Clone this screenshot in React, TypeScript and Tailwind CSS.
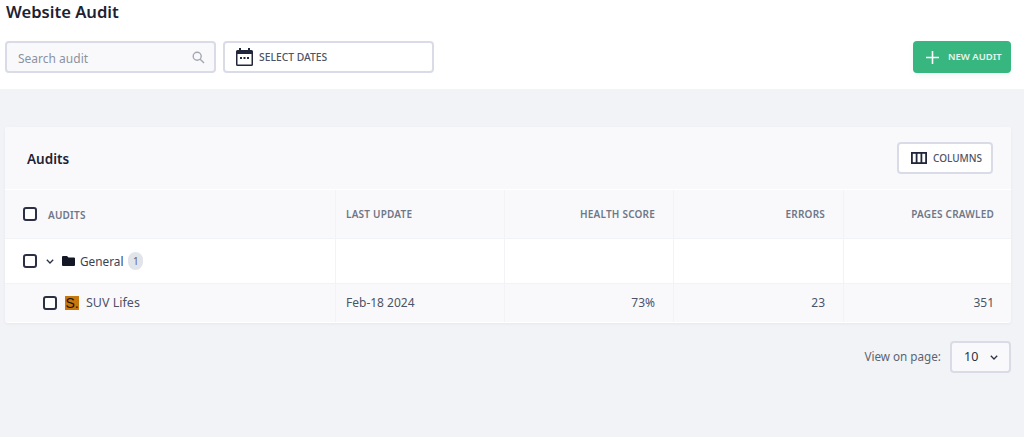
function Checkbox() {
  return <span className="block w-[14px] h-[14px] shrink-0 rounded-[3px] border-2 border-[#2b3044] bg-white" />;
}

function HeadCell({ label, right }: { label: string; right?: boolean }) {
  return (
    <div className={`flex items-center px-[10px] pr-[18px] pt-[1px] bg-[#f9f9fc] text-[10px] font-semibold tracking-[0.2px] text-[#6f7787] ${right ? 'justify-end' : ''}`}>
      {label}
    </div>
  );
}

export default function App() {
  return (
    <div className="w-[1024px] h-[437px] overflow-hidden bg-[#f2f3f7] font-['Noto_Sans',sans-serif] text-[#2b3044]">
      {/* Top bar */}
      <div className="h-[89px] bg-white px-[5px]">
        <h1 className="text-[16.6px] leading-[24px] font-semibold text-[#1d2233] pl-[1px]">Website Audit</h1>
        <div className="mt-[17px] flex items-center">
          <div className="flex items-center justify-between w-[211px] h-[32px] rounded-[4px] border-2 border-[#d9dbe7] bg-[#f9f9fc] pl-[11px] pr-[9px]">
            <span className="pt-[3px] text-[12px] text-[#8c929e]">Search audit</span>
            <svg width="13" height="13" viewBox="0 0 13 13" fill="none" stroke="#a3a8b2" strokeWidth="1.4">
              <circle cx="5.2" cy="5.2" r="4" />
              <path d="M8.2 8.2 12 12" />
            </svg>
          </div>
          <div className="ml-[7px] flex items-center w-[211px] h-[32px] rounded-[4px] border-2 border-[#d9dbe7] bg-white pl-[11px]">
            <svg width="17" height="18" viewBox="0 0 17 18">
              <path fill="#22263a" d="M3 0h2v2h7V0h2v2h1.500A1.500 1.500 0 0 1 17 3.500v13a1.500 1.500 0 0 1-1.500 1.500h-14A1.500 1.500 0 0 1 0 16.500v-13A1.500 1.500 0 0 1 1.500 2H3zM1.500 6v10.500h14V6z" />
              <path fill="#22263a" d="M4 9h2v2H4zM7.500 9h2v2h-2zM11 9h2v2h-2z" />
            </svg>
            <span className="ml-[6px] pt-[1px] text-[10.3px] font-medium text-[#4d5364]">SELECT DATES</span>
          </div>
          <button className="ml-auto mr-[8px] flex items-center h-[32px] w-[98px] rounded-[4px] bg-[#38b680] pl-[13px] shadow-[0_3px_6px_rgba(56,182,128,0.08)]">
            <svg width="13" height="13" viewBox="0 0 13 13" stroke="#fff" strokeWidth="1.6">
              <path d="M6.500 0v13M0 6.500h13" />
            </svg>
            <span className="ml-[9px] pt-[1px] text-[9.5px] font-semibold text-[#e6f7ef]">NEW AUDIT</span>
          </button>
        </div>
      </div>

      {/* Audits card */}
      <div className="mt-[38px] ml-[5px] w-[1006px] h-[196px] rounded-[3px] bg-white shadow-[0_1px_3px_rgba(40,50,80,0.06)] overflow-hidden">
        <div className="h-[62px] bg-[#f9f9fc] flex items-center justify-between pl-[22px] pr-[18px]">
          <span className="pt-[2px] text-[13.5px] font-semibold text-[#1d2233]">Audits</span>
          <button className="flex items-center h-[32px] w-[96px] rounded-[4px] border-2 border-[#d9dbe7] bg-white pl-[12px]">
            <svg width="16" height="12" viewBox="0 0 16 12" fill="none" stroke="#22263a" strokeWidth="1.8">
              <rect x="0.900" y="0.900" width="14.200" height="10.200" />
              <path d="M5.600 1v10M10.400 1v10" />
            </svg>
            <span className="ml-[6px] pt-[1px] text-[10px] font-medium text-[#4d5364]">COLUMNS</span>
          </button>
        </div>

        <div className="mt-[1px] grid grid-cols-[330px_168px_168px_169px_168px] gap-x-[1px] gap-y-[1px] bg-[#f2f3f7] grid-rows-[48px_44px_38px]">
          {/* Header */}
          <div className="flex items-center pl-[18px] bg-[#f9f9fc]">
            <Checkbox />
            <span className="ml-[11px] pt-[2px] text-[10px] font-semibold tracking-[0.2px] text-[#6f7787]">AUDITS</span>
          </div>
          <HeadCell label="LAST UPDATE" />
          <HeadCell label="HEALTH SCORE" right />
          <HeadCell label="ERRORS" right />
          <HeadCell label="PAGES CRAWLED" right />

          {/* Folder row */}
          <div className="flex items-center pl-[18px] bg-white">
            <Checkbox />
            <svg className="ml-[9px]" width="8" height="5" viewBox="0 0 8 5" fill="none" stroke="#2b3044" strokeWidth="1.300">
              <path d="M0.800 0.800 4 4 7.200 0.800" />
            </svg>
            <svg className="ml-[8px]" width="13" height="10" viewBox="0 0 13 10">
              <path fill="#141826" d="M1 0h4l1.500 1.500H12a1 1 0 0 1 1 1V9a1 1 0 0 1-1 1H1a1 1 0 0 1-1-1V1a1 1 0 0 1 1-1z" />
            </svg>
            <span className="ml-[5px] pt-[2px] text-[11.8px] text-[#3b4152]">General</span>
            <span className="ml-[5px] flex items-center justify-center w-[15px] h-[18px] rounded-full bg-[#e1e5ea] text-[10px] text-[#5c6372]">1</span>
          </div>
          <div className="bg-white" />
          <div className="bg-white" />
          <div className="bg-white" />
          <div className="bg-white" />

          {/* Audit row */}
          <div className="flex items-center pl-[38px] bg-[#f9f9fc]">
            <Checkbox />
            <span className="ml-[8px] flex items-center justify-center w-[14px] h-[14px] bg-[#c8770e] text-[14px] leading-none text-[#1a1206] font-['Liberation_Sans',sans-serif]">S.</span>
            <span className="ml-[7px] text-[12.5px] text-[#4d5364]">SUV Lifes</span>
          </div>
          <div className="flex items-center pl-[10px] bg-[#f9f9fc] text-[12px] text-[#4d5364]">Feb-18 2024</div>
          <div className="flex items-center justify-end pr-[18px] bg-[#f9f9fc] text-[12px] text-[#4d5364]">73%</div>
          <div className="flex items-center justify-end pr-[18px] bg-[#f9f9fc] text-[12px] text-[#4d5364]">23</div>
          <div className="flex items-center justify-end pr-[18px] bg-[#f9f9fc] text-[12px] text-[#4d5364]">351</div>
        </div>
      </div>

      {/* Pager */}
      <div className="mt-[18px] mr-[13px] flex items-center justify-end">
        <span className="text-[11.7px] text-[#5c6372]">View on page:</span>
        <div className="ml-[9px] flex items-center justify-between w-[61px] h-[32px] rounded-[4px] border-2 border-[#d9dbe7] bg-[#f9f9fc] pl-[12px] pr-[11px]">
          <span className="text-[12.5px] text-[#2b3044]">10</span>
          <svg width="8" height="5" viewBox="0 0 8 5" fill="none" stroke="#2b3044" strokeWidth="1.300">
            <path d="M0.800 0.800 4 4 7.200 0.800" />
          </svg>
        </div>
      </div>
    </div>
  );
}
